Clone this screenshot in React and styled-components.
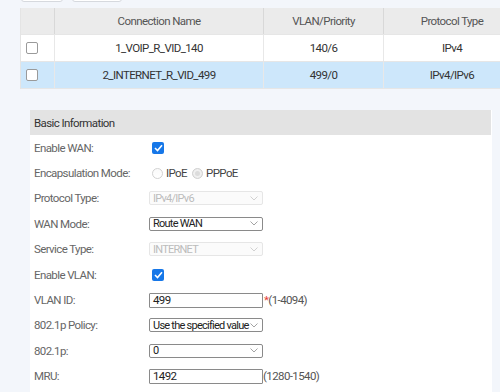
import React from 'react';
import styled, { createGlobalStyle } from 'styled-components';

const GlobalStyle = createGlobalStyle`
  body {
    margin: 0;
    background: #f3f6fb;
    font-family: Roboto, "Liberation Sans", sans-serif;
    font-size: 11.5px;
    letter-spacing: -0.6px;
    overflow: hidden;
  }
`;

const Page = styled.div`
  padding-left: 20px;
  width: 520px;
`;

const Toolbar = styled.div`
  display: flex;
  gap: 9px;
  margin-top: -20px;
  padding-left: 1px;
`;

const ToolButton = styled.div`
  width: ${p => p.w}px;
  height: 22px;
  background: #fff;
  border: 1px solid #d6d9de;
  border-radius: 3px;
  box-sizing: border-box;
`;

const Table = styled.div`
  margin-top: 6px;
  width: 500px;
  border-left: 1px solid #e4e4e4;
  color: #333;
`;

const Row = styled.div`
  display: grid;
  grid-template-columns: 34px 209px 120px 1fr;
  height: 26px;
  background: ${p => (p.head ? '#ebebeb' : p.selected ? '#cde7fb' : '#fff')};
  border-bottom: 1px solid #e6e6e6;
`;

const Cell = styled.div`
  display: flex;
  align-items: center;
  justify-content: center;
  border-right: 1px solid ${p => (p.head ? '#d8d8d8' : '#e8e8e8')};
  color: ${p => (p.head ? '#555' : '#333')};
`;

const CheckCell = styled(Cell)`
  justify-content: flex-start;
  padding-left: 5px;
`;

const BoxCheck = styled.div`
  width: 12px;
  height: 12px;
  border: 1px solid #9a9a9a;
  border-radius: 2px;
  background: #fff;
  box-sizing: border-box;
`;

const Panel = styled.div`
  margin: 21px 0 0 10px;
  width: 462px;
  background: #fff;
  padding-bottom: 20px;
`;

const PanelHeader = styled.div`
  height: 25px;
  width: 461px;
  background: #e3e3e3;
  display: flex;
  align-items: center;
  padding-left: 4px;
  box-sizing: border-box;
  color: #333;
`;

const FormRow = styled.div`
  display: grid;
  grid-template-columns: 115px auto;
  align-items: center;
  height: 25.4px;
  padding-left: 4px;
`;

const Label = styled.div`
  color: #666;
`;

const Control = styled.div`
  display: flex;
  align-items: center;
  color: #333;
`;

const Tick = styled.div`
  width: 12px;
  height: 12px;
  margin-left: 3px;
  background: #1677e8;
  border-radius: 2px;
  display: flex;
  align-items: center;
  justify-content: center;
`;

const Radio = styled.span`
  width: 11px;
  height: 11px;
  border-radius: 50%;
  border: 1px solid #d2d2d2;
  background: ${p => (p.checked ? '#dcdcdc' : 'linear-gradient(#fafafa, #fff)')};
  margin: 0 3px 0 ${p => (p.first ? 3 : 5)}px;
  box-sizing: border-box;
  box-shadow: ${p => (p.checked ? 'inset 0 0 0 2px #f0f0f0' : 'none')};
`;

const RadioText = styled.span`
  color: #444;
`;

const SelectBox = styled.div`
  width: 114px;
  height: 14px;
  box-sizing: border-box;
  border: 1px solid ${p => (p.disabled ? '#e6e6e6' : '#8a8a8a')};
  border-radius: 2px;
  background: ${p => (p.disabled ? '#fbfbfb' : '#fff')};
  color: ${p => (p.disabled ? '#bcbcbc' : '#222')};
  display: flex;
  align-items: center;
  justify-content: space-between;
  padding: 0 4px 0 3px;
  font-size: 11px;
  letter-spacing: -0.75px;
  white-space: nowrap;
`;

const TextBox = styled.div`
  width: 114px;
  height: 15px;
  box-sizing: border-box;
  border: 1px solid #8a8a8a;
  border-radius: 1px;
  display: flex;
  align-items: center;
  padding: 0 3px;
  color: #222;
`;

const Star = styled.span`
  color: #e53935;
  margin-left: 1px;
`;

const Hint = styled.span`
  color: #555;
`;

const Chevron = ({ color }) => (
  <svg width="8" height="5" viewBox="0 0 8 5">
    <path d="M0.5 0.5 L4 4 L7.5 0.5" fill="none" stroke={color} strokeWidth="0.9" />
  </svg>
);

const Select = ({ value, disabled }) => (
  <SelectBox disabled={disabled}>
    <span>{value}</span>
    <Chevron color={disabled ? '#ccc' : '#999'} />
  </SelectBox>
);

const Check = () => (
  <Tick>
    <svg width="9" height="8" viewBox="0 0 9 8">
      <path d="M1 4 L3.5 6.5 L8 1.2" fill="none" stroke="#fff" strokeWidth="1.6" />
    </svg>
  </Tick>
);

const connections = [
  { name: '1_VOIP_R_VID_140', vlan: '140/6', proto: 'IPv4' },
  { name: '2_INTERNET_R_VID_499', vlan: '499/0', proto: 'IPv4/IPv6', selected: true },
];

const App = () => (
  <Page>
    <GlobalStyle />
    <Toolbar>
      <ToolButton w={42} />
      <ToolButton w={50} />
    </Toolbar>
    <Table>
      <Row head>
        <Cell head />
        <Cell head>Connection Name</Cell>
        <Cell head>VLAN/Priority</Cell>
        <Cell head>Protocol Type</Cell>
      </Row>
      {connections.map((c, i) => (
        <Row key={i} selected={c.selected}>
          <CheckCell><BoxCheck /></CheckCell>
          <Cell>{c.name}</Cell>
          <Cell>{c.vlan}</Cell>
          <Cell>{c.proto}</Cell>
        </Row>
      ))}
    </Table>
    <Panel>
      <PanelHeader>Basic Information</PanelHeader>
      <FormRow>
        <Label>Enable WAN:</Label>
        <Control><Check /></Control>
      </FormRow>
      <FormRow>
        <Label>Encapsulation Mode:</Label>
        <Control>
          <Radio first />
          <RadioText>IPoE</RadioText>
          <Radio checked />
          <RadioText>PPPoE</RadioText>
        </Control>
      </FormRow>
      <FormRow>
        <Label>Protocol Type:</Label>
        <Control><Select value="IPv4/IPv6" disabled /></Control>
      </FormRow>
      <FormRow>
        <Label>WAN Mode:</Label>
        <Control><Select value="Route WAN" /></Control>
      </FormRow>
      <FormRow>
        <Label>Service Type:</Label>
        <Control><Select value="INTERNET" disabled /></Control>
      </FormRow>
      <FormRow>
        <Label>Enable VLAN:</Label>
        <Control><Check /></Control>
      </FormRow>
      <FormRow>
        <Label>VLAN ID:</Label>
        <Control>
          <TextBox>499</TextBox>
          <Star>*</Star>
          <Hint>(1-4094)</Hint>
        </Control>
      </FormRow>
      <FormRow>
        <Label>802.1p Policy:</Label>
        <Control><Select value="Use the specified value" /></Control>
      </FormRow>
      <FormRow>
        <Label>802.1p:</Label>
        <Control><Select value="0" /></Control>
      </FormRow>
      <FormRow>
        <Label>MRU:</Label>
        <Control>
          <TextBox>1492</TextBox>
          <Hint>(1280-1540)</Hint>
        </Control>
      </FormRow>
    </Panel>
  </Page>
);

export default App;
